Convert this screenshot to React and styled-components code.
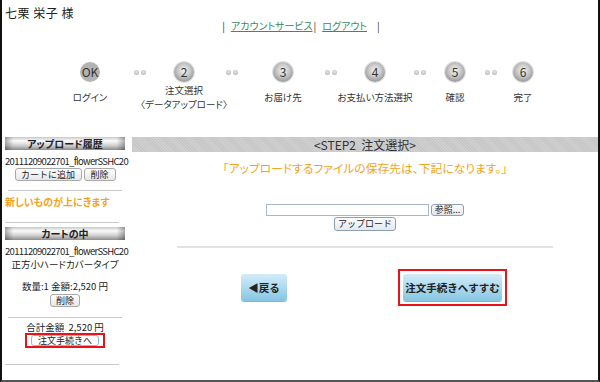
import React from 'react';
import styled, { createGlobalStyle } from 'styled-components';

const GlobalStyle = createGlobalStyle`
  html, body {
    margin: 0;
    padding: 0;
    background: #fff;
  }
  body {
    font-family: "Noto Sans CJK JP", "Noto Sans", sans-serif;
    font-feature-settings: "palt";
    color: #222;
  }
`;

const Frame = styled.div`
  box-sizing: border-box;
  width: 600px;
  height: 382px;
  border-left: 2px solid #111;
  border-right: 2px solid #111;
  border-bottom: 2px solid #555;
  background: #fff;
  overflow: hidden;
`;

const UserName = styled.div`
  padding: 6px 0 0 3px;
  font-size: 12px;
  line-height: 14px;
  letter-spacing: 0.5px;
`;

const LinkBar = styled.div`
  display: flex;
  justify-content: center;
  align-items: center;
  padding-left: 2px;
  font-size: 10px;
  line-height: 12px;
  color: #333;
`;

const Pipe = styled.span`
  color: #333;
  margin: 0 ${p => p.$right || 0}px 0 ${p => p.$left || 0}px;
`;

const NavLink = styled.a`
  color: #3d8a5a;
  text-decoration: underline;
  cursor: pointer;
`;

const Steps = styled.div`
  display: flex;
  align-items: flex-start;
  padding: 30px 0 0 66px;
  height: 105px;
  box-sizing: border-box;
`;

const Step = styled.div`
  width: ${p => p.$w}px;
  display: flex;
  flex-direction: column;
  align-items: center;
`;

const Circle = styled.div`
  width: 20px;
  height: 20px;
  flex: none;
  border-radius: 50%;
  display: flex;
  align-items: center;
  justify-content: center;
  font-size: 12px;
  line-height: 14px;
  color: #333;
  background: ${p => p.$done
    ? '#b3b3b3'
    : 'radial-gradient(circle at 50% 42%, #f4f4f4 0%, #c9c9c9 40%, #8a8a8a 85%, #777 100%)'};
  box-shadow: ${p => p.$done ? 'none' : '0 0 0 1px #e2e2e2'};
`;

const StepLabel = styled.div`
  margin-top: 1px;
  height: 28px;
  display: flex;
  justify-content: center;
  align-items: center;
  white-space: nowrap;
  text-align: center;
  font-size: 9.5px;
  line-height: 14px;
  color: #333;
`;

const Dots = styled.div`
  width: ${p => p.$w}px;
  height: 20px;
  display: flex;
  justify-content: center;
  align-items: center;
  gap: 2px;
`;

const Dot = styled.span`
  width: 5px;
  height: 5px;
  border-radius: 50%;
  background: radial-gradient(circle at 50% 40%, #e8e8e8, #a8a8a8);
`;

const Body = styled.div`
  display: flex;
  align-items: flex-start;
  padding-left: 3px;
`;

const Sidebar = styled.div`
  width: 120px;
  display: flex;
  flex-direction: column;
  align-items: center;
  font-size: 9.5px;
  line-height: 12px;
`;

const SideHeader = styled.div`
  align-self: stretch;
  height: 13px;
  margin-top: ${p => p.$mt || 0}px;
  display: flex;
  align-items: center;
  justify-content: center;
  font-size: 10px;
  font-weight: bold;
  color: #222;
  background:
    linear-gradient(to right, rgba(0,0,0,0.3), rgba(0,0,0,0) 7%, rgba(0,0,0,0) 93%, rgba(0,0,0,0.3)),
    linear-gradient(#c8c8c8, #fbfbfb 30%, #d0d0d0 65%, #8c8c8c);
`;

const FileName = styled.div`
  margin-top: ${p => p.$mt || 0}px;
  padding-left: 3px;
  white-space: nowrap;
  letter-spacing: -0.7px;
`;

const SideText = styled.div`
  margin-top: ${p => p.$mt || 0}px;
  white-space: nowrap;
  align-self: ${p => p.$left ? 'flex-start' : 'center'};
  color: ${p => p.$orange ? '#f5a31a' : '#222'};
  font-weight: ${p => p.$orange ? 'bold' : 'normal'};
  font-size: ${p => p.$orange ? '10px' : '9.5px'};
  line-height: ${p => p.$lh || (p.$orange ? 14 : 12)}px;
`;

const ButtonRow = styled.div`
  display: flex;
  gap: 2px;
  margin-top: ${p => p.$mt || 0}px;
`;

const SmallButton = styled.button`
  height: ${p => p.$h || 13}px;
  width: ${p => p.$w}px;
  padding: 0;
  margin-top: ${p => p.$mt || 0}px;
  font-family: inherit;
  font-size: 9px;
  line-height: 10px;
  color: #222;
  border: 1px solid ${p => p.$blue ? '#8fbcd2' : '#a9a9a9'};
  border-radius: 3px;
  background: ${p => p.$blue ? '#fff' : 'linear-gradient(#ffffff, #e6e6e6)'};
  cursor: pointer;
`;

const SideRule = styled.hr`
  border: none;
  border-top: 1px solid #c9c9c9;
  margin: ${p => p.$mt || 0}px 0 0 0;
  width: ${p => p.$w || 114}px;
  align-self: ${p => p.$full ? 'stretch' : 'center'};
`;

const RedBox = styled.div`
  margin-top: ${p => p.$mt || 0}px;
  margin-left: ${p => p.$ml || 0}px;
  border: 2px solid #e8141c;
  padding: ${p => p.$pad};
  display: flex;
  justify-content: center;
`;

const Main = styled.div`
  flex: 1;
  margin-left: 7px;
  display: flex;
  flex-direction: column;
  align-items: center;
`;

const MainHeader = styled.div`
  align-self: stretch;
  height: 15px;
  display: flex;
  align-items: center;
  justify-content: center;
  font-size: 12px;
  color: #333;
  background-color: #c6c6c6;
  background-image: repeating-linear-gradient(45deg, rgba(255,255,255,0.18) 0 1px, transparent 1px 2px);
`;

const Notice = styled.div`
  margin-top: 9px;
  font-size: 11.8px;
  line-height: 14px;
  color: #f5a31a;
  white-space: nowrap;
`;

const FileRow = styled.div`
  margin-top: 29px;
  display: flex;
  gap: 2px;
`;

const FileInput = styled.div`
  width: 161px;
  height: 10px;
  border: 1px solid #a7b9c9;
  background: #fff;
`;

const FormButton = styled.button`
  width: ${p => p.$w}px;
  height: ${p => p.$h}px;
  margin-top: ${p => p.$mt || 0}px;
  padding: 0;
  font-family: inherit;
  font-size: 9px;
  line-height: 10px;
  color: #222;
  border: 1px solid #8aa0b4;
  border-radius: 3px;
  background: linear-gradient(#fdfdfd, #e4e8ec);
  cursor: pointer;
`;

const MainRule = styled.hr`
  width: 376px;
  border: none;
  border-top: 2px solid #e2e2e2;
  margin: 15px 0 0 0;
`;

const ActionRow = styled.div`
  align-self: stretch;
  display: flex;
  align-items: center;
  padding-left: 109px;
  margin-top: 21px;
`;

const BlueButton = styled.button`
  width: ${p => p.$w}px;
  height: 27px;
  padding: 0;
  font-family: inherit;
  font-size: 10.5px;
  font-weight: bold;
  color: #222;
  border: none;
  border-radius: 3px;
  background: linear-gradient(#d3ecf7, #a9d8ee 55%, #86c5e2);
  box-shadow: 0 1px 0 #7fb8d4;
  cursor: pointer;
`;

const steps = [
  { label: 'OK', done: true, w: 44, text: ['ログイン'] },
  { dots: 56 },
  { label: '2', w: 32, text: ['注文選択', '〈データアップロード〉'] },
  { dots: 64 },
  { label: '3', w: 38, text: ['お届け先'] },
  { dots: 58 },
  { label: '4', w: 30, text: ['お支払い方法選択'] },
  { dots: 60 },
  { label: '5', w: 10, text: ['確認'] },
  { dots: 62 },
  { label: '6', w: 2, text: ['完了'] },
];

export default function App() {
  return (
    <>
      <GlobalStyle />
      <Frame>
        <UserName>七栗&nbsp;栄子 様</UserName>
        <LinkBar>
          <Pipe $right={6}>|</Pipe>
          <NavLink>アカウントサービス</NavLink>
          <Pipe $left={1} $right={6}>|</Pipe>
          <NavLink>ログアウト</NavLink>
          <Pipe $left={10}>|</Pipe>
        </LinkBar>

        <Steps>
          {steps.map((s, i) =>
            s.dots ? (
              <Dots key={i} $w={s.dots}>
                <Dot />
                <Dot />
              </Dots>
            ) : (
              <Step key={i} $w={s.w}>
                <Circle $done={s.done}>{s.label}</Circle>
                <StepLabel>
                  <span>
                    {s.text[0]}
                    {s.text[1] && <br />}
                    {s.text[1]}
                  </span>
                </StepLabel>
              </Step>
            )
          )}
        </Steps>

        <Body>
          <Sidebar>
            <SideHeader>アップロード履歴</SideHeader>
            <FileName $mt={5}>20111209022701_flowerSSHC20</FileName>
            <ButtonRow $mt={1}>
              <SmallButton $w={67}>カートに追加</SmallButton>
              <SmallButton $w={32}>削除</SmallButton>
            </ButtonRow>
            <SideRule $mt={9} />
            <SideText $left $orange $mt={4}>新しいものが上にきます</SideText>
            <SideRule $mt={13} $full />
            <SideHeader $mt={4}>カートの中</SideHeader>
            <FileName $mt={5}>20111209022701_flowerSSHC20</FileName>
            <SideText $mt={1}>正方小ハードカバータイプ</SideText>
            <SideText $mt={10}>数量:1 金額:2,520 円</SideText>
            <SmallButton $w={30} $mt={2}>削除</SmallButton>
            <SideRule $mt={10} />
            <SideText $mt={4} $lh={10}>合計金額&nbsp;&nbsp;2,520 円</SideText>
            <RedBox $mt={1} $pad="0 4px">
              <SmallButton $w={68} $h={11} $blue>注文手続きへ</SmallButton>
            </RedBox>
            <SideRule $mt={16} $full />
          </Sidebar>

          <Main>
            <MainHeader>&lt;STEP2&nbsp;&nbsp;注文選択&gt;</MainHeader>
            <Notice>「アップロードするファイルの保存先は、下記になります。」</Notice>
            <FileRow>
              <FileInput />
              <FormButton $w={33} $h={12}>参照...</FormButton>
            </FileRow>
            <FormButton $w={62} $h={14} $mt={1}>アップロード</FormButton>
            <MainRule />
            <ActionRow>
              <BlueButton $w={46}>◀戻る</BlueButton>
              <RedBox $ml={111} $pad="3px 3px">
                <BlueButton $w={99}>注文手続きへすすむ</BlueButton>
              </RedBox>
            </ActionRow>
          </Main>
        </Body>
      </Frame>
    </>
  );
}
